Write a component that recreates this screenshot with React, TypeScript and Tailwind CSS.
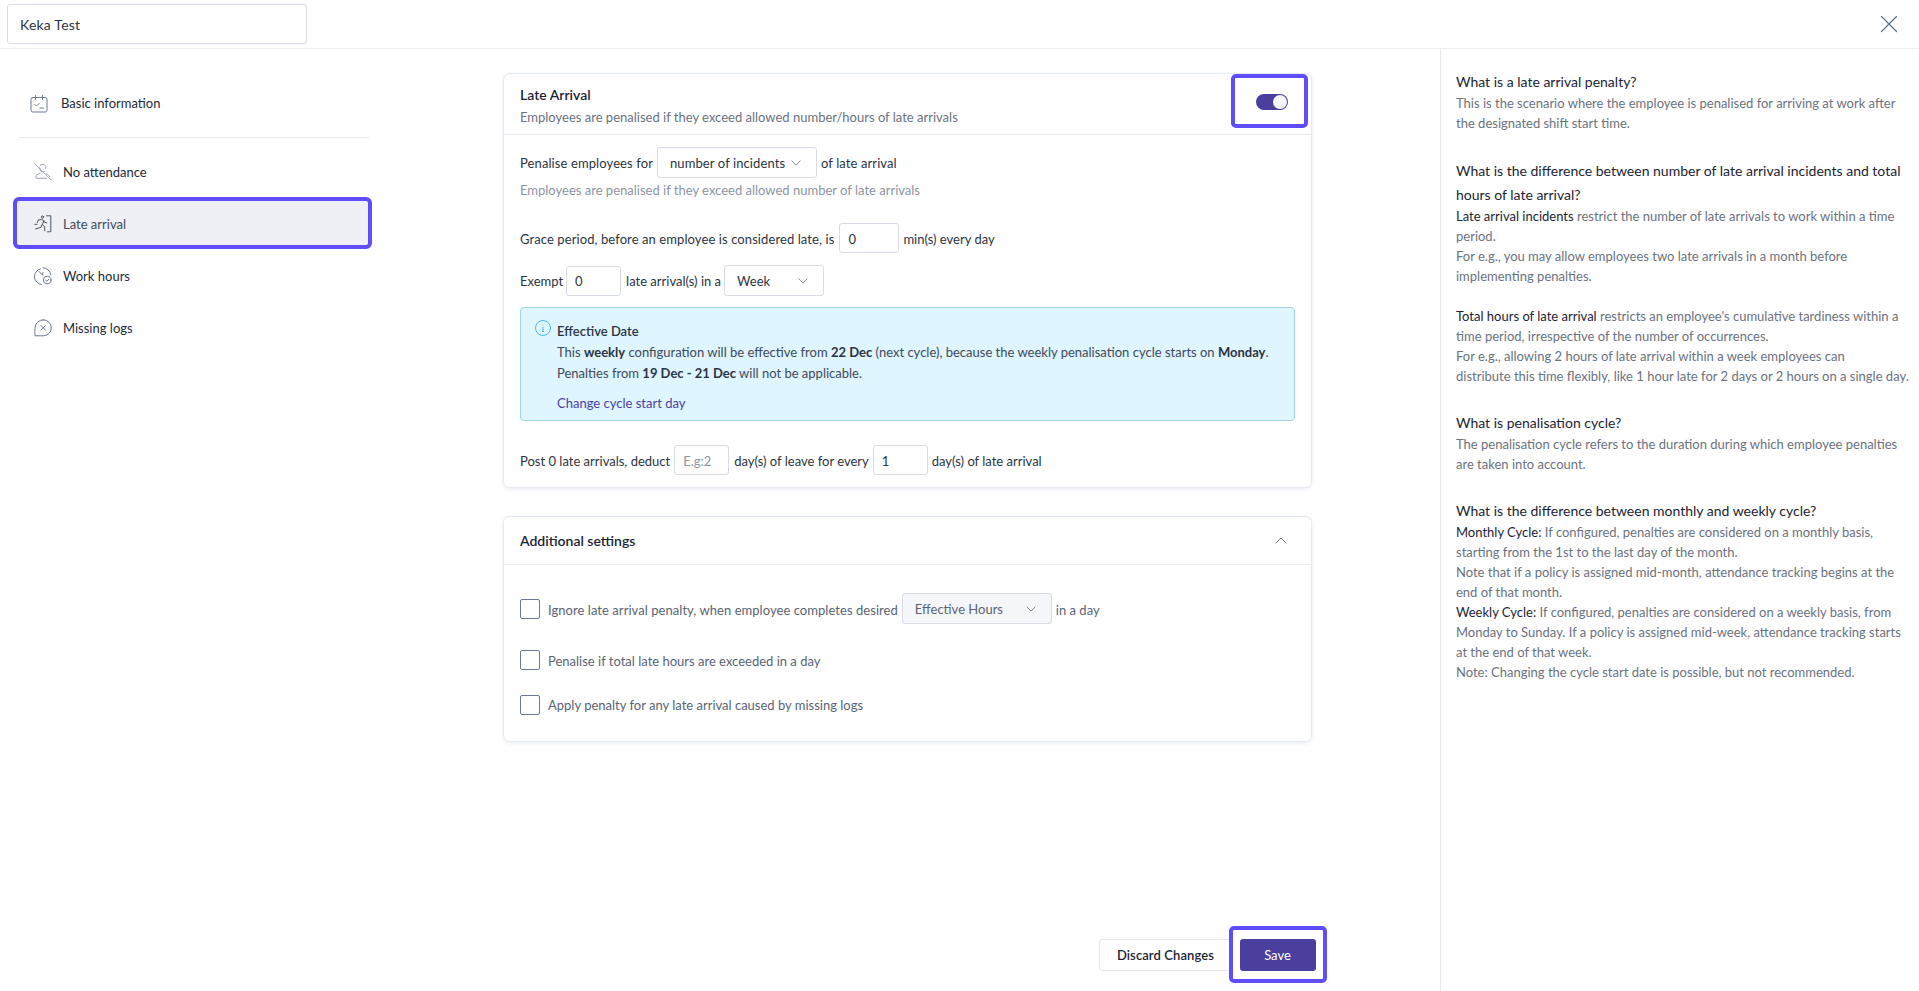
import React from "react";

const stroke = "#6b7a90";

function IconCalendar() {
  return (
    <svg width="18" height="18" viewBox="0 0 18 18" fill="none" stroke={stroke} strokeWidth="1" strokeLinecap="round" strokeLinejoin="round">
      <rect x="1" y="2.500" width="16" height="14.500" rx="1.800" />
      <path d="M5.500 .6v3.800M12.500 .6v3.800M4.800 9.500l1.600 1.600 2.600-2.600M10 13h3.500" />
    </svg>
  );
}
function IconNoUser() {
  return (
    <svg width="18" height="18" viewBox="0 0 18 18" fill="none" stroke="#9aa3b2" strokeWidth="1" strokeLinecap="round" strokeLinejoin="round">
      <path d="M6.300 2.200a3.400 3.400 0 0 1 5.600 3.300M10.400 8.500A3.400 3.400 0 0 1 5.600 4.800M6 10.300c-2.600.6-4.200 2-4.200 3.800 0 .8.500 1.200 1.200 1.200h9.500M12.600 11c1.400.6 2.600 1.500 3 2.600M.8 .6l16.400 16.400" />
    </svg>
  );
}
function IconRunner() {
  return (
    <svg width="18" height="18" viewBox="0 0 18 18" fill="none" stroke="#4b5563" strokeWidth="1" strokeLinecap="round" strokeLinejoin="round">
      <circle cx="8.500" cy="2" r="1.100" />
      <path d="M12.500 .8h4.300v16h-3.300M4.300 5.200l3-1 2.600 1.500-1.600 4 2.400 2v4M8 9.700l-1 2.600L1.500 14M9.900 5.700l.7 1.600 2.200.6M4.300 5.200L3.300 7.500M.8 9.300h2.200" />
    </svg>
  );
}
function IconClockCheck() {
  return (
    <svg width="18" height="18" viewBox="0 0 18 18" fill="none" stroke={stroke} strokeWidth="1" strokeLinecap="round" strokeLinejoin="round">
      <path d="M6.500 1.800a8 8 0 0 0 1 15.700M9.300 .8a8 8 0 0 1 7.500 7M5 4.500l3.500 3.500M8.500 8l.5-2.500" />
      <circle cx="13.200" cy="13" r="3.800" />
      <path d="M11.600 13.100l1.200 1.100 2-2" />
    </svg>
  );
}
function IconMissing() {
  return (
    <svg width="18" height="18" viewBox="0 0 18 18" fill="none" stroke={stroke} strokeWidth="1" strokeLinecap="round" strokeLinejoin="round">
      <path d="M9.300 .8a8 8 0 0 1 0 16H1c-.2-3-.2-5.400 0-7.500A8.200 8.200 0 0 1 9.300 .8z" />
      <path d="M7 6.600l4.400 4.400M11.400 6.600L7 11" />
    </svg>
  );
}
function Chevron({ up = false, color = "#6b7280", big = false }: { up?: boolean; color?: string; big?: boolean }) {
  return (
    <svg width={big ? 12 : 10} height={big ? 7 : 6} viewBox="0 0 12 7" fill="none" stroke={color} strokeWidth="1" strokeLinecap="round" strokeLinejoin="round">
      <path d={up ? "M1 6L6 1l5 5" : "M1 1l5 5 5-5"} />
    </svg>
  );
}
function NavItem({ icon, label, active = false }: { icon: React.ReactNode; label: string; active?: boolean }) {
  return (
    <div className={active
      ? "h-[52px] w-[359px] ml-[13px] pl-[17px] pt-[2px] flex items-center gap-[11px] border-4 border-[#5f4dfb] rounded-[6px] bg-[#eff0f5] text-[13px] text-[#3e4a5c]"
      : "h-[52px] w-[359px] ml-[13px] pl-[21px] pt-[2px] flex items-center gap-[11px] text-[13px] text-[#222b3a]"}>
      {icon}
      <span className="pt-[2px]">{label}</span>
    </div>
  );
}
function Select({ label, w, muted = false }: { label: string; w: string; muted?: boolean }) {
  return (
    <div className={`${w} h-[31px] shrink-0 rounded-[3px] border border-[#d8dce6] flex items-center justify-between pl-[12px] pr-[15px] ${muted ? "bg-[#f5f6fa] text-[#5a6475]" : "bg-white text-[#2b3444]"}`}>
      <span className="pt-[3px]">{label}</span>
      <Chevron />
    </div>
  );
}
function NumBox({ value, w, placeholder = false }: { value: string; w: string; placeholder?: boolean }) {
  return (
    <div className={`${w} h-[30px] shrink-0 rounded-[3px] border border-[#d8dce6] flex items-center pl-[8px] ${placeholder ? "text-[#8d95a5]" : "text-[#2b3444]"}`}>
      <span className="pt-[3px]">{value}</span>
    </div>
  );
}
function Check() {
  return <span className="w-[20px] h-[20px] shrink-0 rounded-[2px] border border-[#6b7a90] bg-white" />;
}
function Q({ children, className = "" }: { children: React.ReactNode; className?: string }) {
  return <div className={`text-[14px] leading-[24px] pt-[1px] -mb-[1px] text-[#1c2434] ${className}`}>{children}</div>;
}
function B({ children }: { children: React.ReactNode }) {
  return <span className="text-[#1c2434]">{children}</span>;
}

export default function App() {
  return (
    <div className="h-screen w-full overflow-hidden bg-white font-['Lato',sans-serif] text-[13px] flex flex-col">
      <header className="h-[49px] shrink-0 border-b border-[#eff0f5] flex items-center justify-between pl-[7px] pr-[21px]">
        <div className="w-[300px] h-[40px] rounded-[3px] border border-[#d8dce6] flex items-center pl-[12px] text-[14px] tracking-[0.2px] text-[#2b3444]">Keka Test</div>
        <svg width="18" height="18" viewBox="0 0 18 18" fill="none" stroke="#5f6f85" strokeWidth="1.200" strokeLinecap="round"><path d="M1.500 1.500l15 15M16.500 1.500l-15 15" /></svg>
      </header>

      <div className="flex-1 min-h-0 flex">
        <aside className="w-[374px] shrink-0 pt-[39px]">
          <div className="h-[32px] pl-[30px] flex items-center gap-[13px] text-[13px] text-[#222b3a]">
            <IconCalendar />
            <span>Basic information</span>
          </div>
          <div className="ml-[19px] mr-[5px] mt-[17px] mb-[7px] h-px bg-[#e8eaf0]" />
          <NavItem icon={<IconNoUser />} label="No attendance" />
          <NavItem icon={<IconRunner />} label="Late arrival" active />
          <NavItem icon={<IconClockCheck />} label="Work hours" />
          <NavItem icon={<IconMissing />} label="Missing logs" />
        </aside>

        <main className="w-[1066px] shrink-0 flex flex-col pl-[129px]">
          <section className="mt-[24px] w-[809px] h-[415px] rounded-[7px] border border-[#e6eaf1] shadow-[0_1px_4px_rgba(120,140,180,0.18)] bg-white">
            <div className="h-[61px] border-b border-[#e8eaf0] pl-[16px] pr-[3px] flex justify-between">
              <div className="pt-[11px]">
                <div className="text-[14px] leading-[20px] font-semibold text-[#1c2434]">Late Arrival</div>
                <div className="mt-[2px] leading-[20px] text-[#6b7280]">Employees are penalised if they exceed allowed number/hours of late arrivals</div>
              </div>
              <div className="w-[77px] h-[54px] rounded-[5px] border-4 border-[#5f4dfb] flex items-center justify-center pl-[4px]">
                <div className="w-[32px] h-[16px] mt-[1px] rounded-full bg-[#4a3f9f] relative">
                  <span className="absolute right-[1px] top-[1px] w-[14px] h-[14px] rounded-full bg-[#f5f6fa]" />
                </div>
              </div>
            </div>
            <div className="px-[16px] text-[#2b3444]">
              <div className="mt-[12px] flex items-center gap-[4px] tracking-[0.1px]">
                <span className="pt-[3px]">Penalise employees for</span>
                <Select label="number of incidents" w="w-[160px]" />
                <span className="pt-[3px]">of late arrival</span>
              </div>
              <div className="mt-[2px] leading-[20px] text-[#8d95a5]">Employees are penalised if they exceed allowed number of late arrivals</div>
              <div className="mt-[23px] flex items-center">
                <span className="tracking-[0.09px] mr-[5px] pt-[3px]">Grace period, before an employee is considered late, is</span>
                <NumBox value="0" w="w-[60px]" />
                <span className="ml-[4px] pt-[3px]">min(s) every day</span>
              </div>
              <div className="mt-[12px] flex items-center">
                <span className="mr-[3px] pt-[3px]">Exempt</span>
                <NumBox value="0" w="w-[55px]" />
                <span className="ml-[5px] mr-[3px] pt-[3px]">late arrival(s) in a</span>
                <Select label="Week" w="w-[100px]" />
              </div>
              <div className="mt-[11px] h-[114px] rounded-[4px] border border-[#9fd5e8] bg-[#dff5ff] flex pl-[14px] pt-[12px] text-[#3e4a5c]">
                <svg className="shrink-0" width="16" height="16" viewBox="0 0 16 16" fill="none" stroke="#45bdf0" strokeWidth="1"><circle cx="8" cy="8" r="7.500" /><path d="M8 7v4.500M7 11.500h2M8 4.200v.6" /></svg>
                <div className="ml-[6px] mt-[1px] leading-[21px]">
                  <div className="font-semibold text-[#2b3444]">Effective Date</div>
                  <div>This <b className="font-bold text-[#2b3444]">weekly</b> configuration will be effective from <b className="font-bold text-[#2b3444]">22 Dec</b> (next cycle), because the weekly penalisation cycle starts on <b className="font-bold text-[#2b3444]">Monday</b>.</div>
                  <div>Penalties from <b className="font-bold text-[#2b3444]">19 Dec - 21 Dec</b> will not be applicable.</div>
                  <div className="mt-[9px] text-[#4a3f9f]">Change cycle start day</div>
                </div>
              </div>
              <div className="mt-[24px] flex items-center gap-[4px]">
                <span className="pt-[3px]">Post 0 late arrivals, deduct</span>
                <NumBox value="E.g:2" w="w-[55px]" placeholder />
                <span className="ml-[1px] pt-[3px]">day(s) of leave for every</span>
                <NumBox value="1" w="w-[55px]" />
                <span className="pt-[3px]">day(s) of late arrival</span>
              </div>
            </div>
          </section>

          <section className="mt-[28px] w-[809px] h-[226px] rounded-[7px] border border-[#e6eaf1] shadow-[0_1px_4px_rgba(120,140,180,0.18)] bg-white">
            <div className="h-[48px] border-b border-[#e8eaf0] px-[16px] pr-[24px] flex items-center justify-between">
              <span className="text-[14px] font-semibold text-[#1c2434]">Additional settings</span>
              <Chevron up big />
            </div>
            <div className="px-[16px] text-[#5a6475]">
              <div className="mt-[28px] flex items-center gap-[4px]">
                <Check />
                <span className="ml-[4px] tracking-[0.05px] pt-[4px]">Ignore late arrival penalty, when employee completes desired</span>
                <Select label="Effective Hours" w="w-[150px]" muted />
                <span className="pt-[4px]">in a day</span>
              </div>
              <div className="mt-[25px] flex items-center gap-[8px]">
                <Check />
                <span className="pt-[3px]">Penalise if total late hours are exceeded in a day</span>
              </div>
              <div className="mt-[23px] flex items-center gap-[8px]">
                <Check />
                <span className="pt-[1px]">Apply penalty for any late arrival caused by missing logs</span>
              </div>
            </div>
          </section>

          <div className="mt-auto mb-[8px] w-[824px] flex items-center justify-end">
            <div className="h-[32px] w-[133px] -mr-[3px] rounded-[3px] border border-[#e6e8ee] flex items-center justify-center text-[13px] font-semibold tracking-[0.1px] text-[#1c2434]"><span className="pt-[2px]">Discard Changes</span></div>
            <div className="w-[98px] h-[57px] rounded-[5px] border-4 border-[#5f4dfb] bg-white flex items-center justify-center relative">
              <div className="w-[76px] h-[32px] rounded-[3px] bg-[#4a3f9f] flex items-center justify-center text-[13px] text-white"><span className="pt-[3px] -ml-[1px]">Save</span></div>
            </div>
          </div>
        </main>

        <aside className="flex-1 border-l border-[#e8eaf0] pl-[15px] pr-[8px] pt-[20px] leading-[20px] text-[#6b7280]">
          <Q>What is a late arrival penalty?</Q>
          <p>This is the scenario where the employee is penalised for arriving at work after<br />the designated shift start time.</p>
          <Q className="mt-[25px]">What is the difference between number of late arrival incidents and total<br />hours of late arrival?</Q>
          <p><B>Late arrival incidents</B> restrict the number of late arrivals to work within a time<br />period.</p>
          <p>For e.g., you may allow employees two late arrivals in a month before<br />implementing penalties.</p>
          <p className="mt-[20px]"><B>Total hours of late arrival</B> restricts an employee's cumulative tardiness within a<br />time period, irrespective of the number of occurrences.</p>
          <p>For e.g., allowing 2 hours of late arrival within a week employees can<br />distribute this time flexibly, like 1 hour late for 2 days or 2 hours on a single day.</p>
          <Q className="mt-[24px]">What is penalisation cycle?</Q>
          <p>The penalisation cycle refers to the duration during which employee penalties<br />are taken into account.</p>
          <Q className="mt-[24px]">What is the difference between monthly and weekly cycle?</Q>
          <p><B>Monthly Cycle:</B> If configured, penalties are considered on a monthly basis,<br />starting from the 1st to the last day of the month.</p>
          <p>Note that if a policy is assigned mid-month, attendance tracking begins at the<br />end of that month.</p>
          <p><B>Weekly Cycle:</B> If configured, penalties are considered on a weekly basis, from<br />Monday to Sunday. If a policy is assigned mid-week, attendance tracking starts<br />at the end of that week.</p>
          <p>Note: Changing the cycle start date is possible, but not recommended.</p>
        </aside>
      </div>
    </div>
  );
}
